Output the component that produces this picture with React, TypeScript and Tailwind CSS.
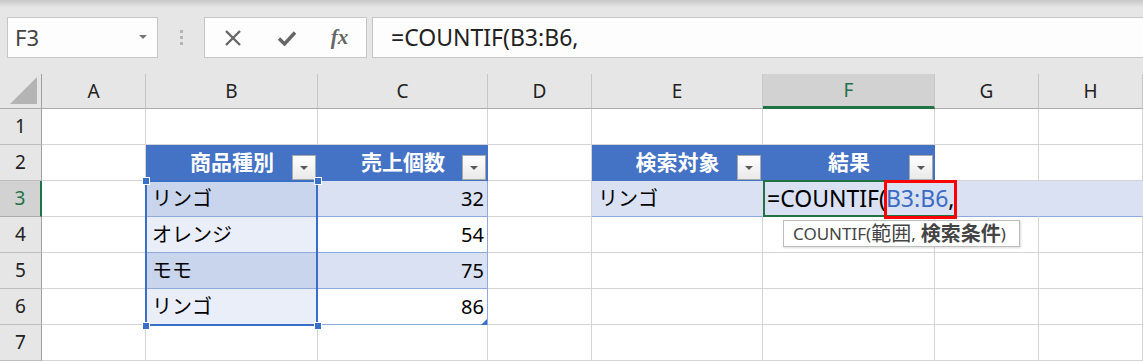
import React from "react";

const F = "font-['Noto_Sans','Noto_Sans_CJK_JP',sans-serif]";

function Cell({ cls = "", children }: { cls?: string; children?: React.ReactNode }) {
  return (
    <div className={`box-border border-r border-b flex items-center overflow-visible whitespace-nowrap text-[20px] text-black ${cls}`}>
      {children}
    </div>
  );
}

function Plain() {
  return <Cell cls="border-[#d4d4d4] bg-white" />;
}

function RowHdr({ n, active = false }: { n: number; active?: boolean }) {
  return active ? (
    <div className="box-border border-b border-b-[#ababab] border-r-2 border-r-[#217346] bg-[#d2d2d2] flex items-center justify-center text-[19px] text-[#217346]">
      {n}
    </div>
  ) : (
    <div className="box-border border-b border-b-[#bdbdbd] border-r border-r-[#9f9f9f] bg-[#e6e6e6] flex items-center justify-center text-[19px] text-[#222]">
      {n}
    </div>
  );
}

function ColHdr({ l, active = false }: { l: string; active?: boolean }) {
  return active ? (
    <div className="box-border border-r border-r-[#c6c6c6] border-b-[3px] border-b-[#217346] bg-[#d2d2d2] flex items-center justify-center text-[19px] text-[#217346]">
      {l}
    </div>
  ) : (
    <div className="box-border border-r border-r-[#c6c6c6] border-b border-b-[#ababab] bg-[#e6e6e6] flex items-center justify-center text-[19px] text-[#222]">
      {l}
    </div>
  );
}

function DropBtn() {
  return (
    <div className="absolute right-[2px] bottom-0 w-[24px] h-[25px] box-border border border-[#a9a9a9] bg-gradient-to-b from-[#ffffff] to-[#e9e9e9] flex items-center justify-center">
      <svg width="10" height="6" viewBox="0 0 10 6">
        <polygon points="1,1 9,1 5,5" fill="#5a5a5a" />
      </svg>
    </div>
  );
}

function Head({ t }: { t: string }) {
  return (
    <div className="relative box-border border-b border-[#4472c4] bg-[#4472c4] flex items-center justify-center text-[21px] font-bold text-white">
      {t}
      <DropBtn />
    </div>
  );
}

function Handle({ cls }: { cls: string }) {
  return <div className={`absolute w-[8px] h-[8px] bg-[#3a6fc8] border border-white ${cls}`} />;
}

export default function App() {
  return (
    <div className={`w-[1143px] h-[362px] overflow-hidden bg-white ${F}`}>
      <div className="h-[7px] bg-gradient-to-b from-[#c7c7c7] to-[#e4e4e4]" />
      <div className="h-[67px] bg-[#e6e6e6] flex items-start pt-[10px]">
        <div className="ml-[7px] w-[151px] h-[41px] box-border border border-[#c6c6c6] bg-[#fdfdfd] flex items-center pl-[7px] pr-[10px]">
          <span className="text-[22px] text-[#444] flex-1">F3</span>
          <svg width="8" height="5" viewBox="0 0 8 5">
            <polygon points="0,0 8,0 4,4" fill="#777" />
          </svg>
        </div>
        <div className="w-[46px] h-[41px] flex flex-col items-center justify-center gap-[3px]">
          <div className="w-[3px] h-[3px] bg-[#b5b5b5]" />
          <div className="w-[3px] h-[3px] bg-[#b5b5b5]" />
          <div className="w-[3px] h-[3px] bg-[#b5b5b5]" />
        </div>
        <div className="w-[163px] h-[41px] box-border border border-[#c6c6c6] bg-[#fdfdfd] flex items-center">
          <div className="w-[56px] flex justify-center">
            <svg width="18" height="18" viewBox="0 0 18 18">
              <path d="M2 2 L16 16 M16 2 L2 16" stroke="#666" strokeWidth="2.4" fill="none" />
            </svg>
          </div>
          <div className="w-[52px] flex justify-center">
            <svg width="20" height="16" viewBox="0 0 20 16">
              <path d="M2 8.5 L7.5 14 L18 2.5" stroke="#666" strokeWidth="3.4" fill="none" />
            </svg>
          </div>
          <div className="w-[53px] flex justify-center">
            <span className="font-['Liberation_Serif',serif] italic font-bold text-[21px] text-[#666] leading-none">fx</span>
          </div>
        </div>
        <div className="ml-[5px] flex-1 h-[41px] box-border border-y border-l border-[#c6c6c6] bg-[#fdfdfd] flex items-center pl-[18px] text-[23px] text-[#222]">
          =COUNTIF(B3:B6,
        </div>
      </div>

      <div className="relative grid grid-cols-[42px_104px_172px_170px_104px_171px_172px_104px_104px] grid-rows-[35px_repeat(7,36px)]">
        {/* header row */}
        <div className="box-border border-r border-r-[#9f9f9f] border-b border-b-[#ababab] bg-[#e6e6e6] relative">
          <svg className="absolute right-[4px] bottom-[4px]" width="27" height="27" viewBox="0 0 27 27">
            <polygon points="27,0 27,27 0,27" fill="#b4b4b4" />
          </svg>
        </div>
        <ColHdr l="A" />
        <ColHdr l="B" />
        <ColHdr l="C" />
        <ColHdr l="D" />
        <ColHdr l="E" />
        <ColHdr l="F" active />
        <ColHdr l="G" />
        <ColHdr l="H" />

        {/* row 1 */}
        <RowHdr n={1} />
        <Plain /><Plain /><Plain /><Plain /><Plain /><Plain /><Plain /><Plain />

        {/* row 2 */}
        <RowHdr n={2} />
        <Plain />
        <Head t="商品種別" />
        <Head t="売上個数" />
        <Plain />
        <Head t="検索対象" />
        <Head t="結果" />
        <Plain />
        <Plain />

        {/* row 3 */}
        <RowHdr n={3} active />
        <Plain />
        <Cell cls="border-b-[#8ea9db] border-r-[#c9d5ec] bg-[#c9d5ec] pl-[6px]">リンゴ</Cell>
        <Cell cls="border-b-[#8ea9db] border-r-[#8ea9db] bg-[#d9e1f2] justify-end pr-[3px]">32</Cell>
        <Plain />
        <Cell cls="border-b-[#8ea9db] border-r-[#d9e1f2] bg-[#d9e1f2] pl-[6px]">リンゴ</Cell>
        <Cell cls="border-b-[#8ea9db] border-r-[#d9e1f2] bg-[#d9e1f2]" />
        <Cell cls="border-b-[#8ea9db] border-r-[#d9e1f2] bg-[#d9e1f2]" />
        <Cell cls="border-b-[#8ea9db] border-r-[#d9e1f2] bg-[#d9e1f2]" />

        {/* row 4 */}
        <RowHdr n={4} />
        <Plain />
        <Cell cls="border-b-[#8ea9db] border-r-[#e9eef8] bg-[#e9eef8] pl-[6px]">オレンジ</Cell>
        <Cell cls="border-b-[#8ea9db] border-r-[#8ea9db] bg-white justify-end pr-[3px]">54</Cell>
        <Plain /><Plain /><Plain /><Plain /><Plain />

        {/* row 5 */}
        <RowHdr n={5} />
        <Plain />
        <Cell cls="border-b-[#8ea9db] border-r-[#c9d5ec] bg-[#c9d5ec] pl-[6px]">モモ</Cell>
        <Cell cls="border-b-[#8ea9db] border-r-[#8ea9db] bg-[#d9e1f2] justify-end pr-[3px]">75</Cell>
        <Plain /><Plain /><Plain /><Plain /><Plain />

        {/* row 6 */}
        <RowHdr n={6} />
        <Plain />
        <Cell cls="border-b-[#8ea9db] border-r-[#e9eef8] bg-[#e9eef8] pl-[6px]">リンゴ</Cell>
        <Cell cls="border-b-[#8ea9db] border-r-[#8ea9db] bg-white justify-end pr-[3px]">86</Cell>
        <Plain /><Plain /><Plain /><Plain /><Plain />

        {/* row 7 */}
        <RowHdr n={7} />
        <Plain /><Plain /><Plain /><Plain /><Plain /><Plain /><Plain /><Plain />

        {/* selection B3:B6 */}
        <div className="absolute left-[145px] top-[106px] w-[173px] h-[146px] border-2 border-[#3a6fc8] pointer-events-none" />
        <Handle cls="left-[142px] top-[103px]" />
        <Handle cls="left-[314px] top-[103px]" />
        <Handle cls="left-[142px] top-[248px]" />
        <Handle cls="left-[314px] top-[248px]" />

        {/* table resize handle */}
        <svg className="absolute left-[481px] top-[245px]" width="6" height="6" viewBox="0 0 6 6">
          <polygon points="6,0 6,6 0,6" fill="#3a6fc8" />
        </svg>

        {/* edit box F3 */}
        <div className="absolute left-[763px] top-[106px] w-[194px] h-[37px] box-border border-2 border-[#217346] bg-[#d9e1f2] flex items-center pl-[2px] text-[23px] text-black whitespace-nowrap">
          <span>=COUNTIF(</span>
          <span className="text-[#3a6cc4]">B3:B6</span>
          <span>,</span>
        </div>
        <div className="absolute left-[884px] top-[106px] w-[73px] h-[39px] border-[3px] border-[#ff0000]" />

        {/* tooltip */}
        <div className="absolute left-[783px] top-[146px] w-[237px] h-[27px] box-border border border-[#bcbcbc] bg-white flex items-center pl-[9px] text-[17px] text-[#444] whitespace-nowrap shadow-[1px_1px_2px_rgba(0,0,0,0.15)]">
          <span>COUNTIF(</span>
          <span className="text-[20px]">範囲</span>
          <span className="mr-[5px]">,</span>
          <span className="font-bold text-[20px]">検索条件</span>
          <span>)</span>
        </div>
      </div>
    </div>
  );
}
